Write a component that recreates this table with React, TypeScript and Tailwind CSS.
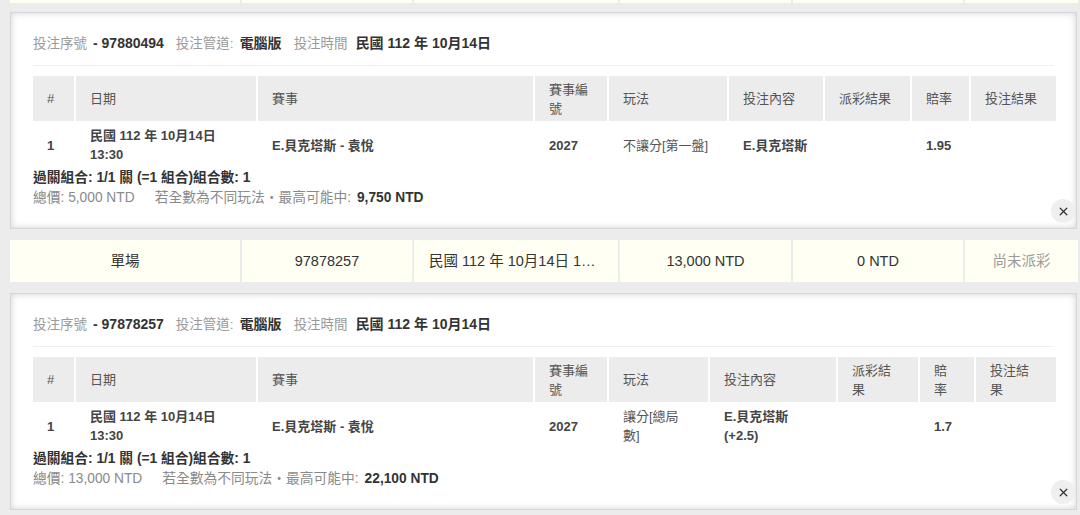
import { X } from "lucide-react";

interface BetRow {
  date: string;
  match: string;
  code: string;
  play: string;
  pick: string;
  payout: string;
  odds: string;
  result: string;
}

interface BetPanelProps {
  serial: string;
  cols: string;
  row: BetRow;
  total: string;
  maxWin: string;
}

const headers = ["#", "日期", "賽事", "賽事編號", "玩法", "投注內容", "派彩結果", "賠率", "投注結果"];

function SummaryRow({ cells, thin }: { cells: string[]; thin?: boolean }) {
  return (
    <div className="ml-[10px] w-[1068px] grid grid-cols-[230px_170px_204px_171px_170px_1fr] gap-x-[2px]">
      {cells.map((c, i) => (
        <div
          key={i}
          className={
            thin
              ? "h-[3px] bg-[#fffff4]"
              : `bg-[#fffff4] py-[11px] px-[15px] text-center text-[14.5px] leading-[20px] truncate ${
                  i === 5 ? "text-[#9a9a9a]" : "text-[#333]"
                }`
          }
        >
          {c}
        </div>
      ))}
    </div>
  );
}

function BetPanel({ serial, cols, row, total, maxWin }: BetPanelProps) {
  const body = [
    { v: "1", bold: true },
    { v: row.date, bold: true },
    { v: row.match, bold: true },
    { v: row.code, bold: true },
    { v: row.play, bold: false },
    { v: row.pick, bold: true, keep: true },
    { v: row.payout, bold: true },
    { v: row.odds, bold: true },
    { v: row.result, bold: true },
  ];

  return (
    <div className="relative ml-[10px] w-[1067px] bg-white border border-[#d6d6d6] shadow-[inset_0_0_7px_rgba(0,0,0,0.18)] px-[22px] pt-5 pb-5 text-[13px]">
      {/* 投注資訊 */}
      <div className="flex items-baseline h-[20px] pb-3 border-b border-[#efefef] text-[13.5px] leading-[20px] box-content">
        <span className="text-[#9a9a9a]">投注序號</span>
        <span className="font-bold text-[#333] text-[14px] ml-[6px] whitespace-pre">- {serial}</span>
        <span className="text-[#9a9a9a] ml-3">投注管道:</span>
        <span className="font-bold text-[#333] text-[14px] ml-[6px]">電腦版</span>
        <span className="text-[#9a9a9a] ml-3">投注時間</span>
        <span className="font-bold text-[#333] text-[14px] ml-[8px] whitespace-pre">民國 112 年 10月14日</span>
      </div>

      <div className={`mt-[10px] grid ${cols} gap-x-[2px] gap-y-[2px]`}>
        {headers.map((h) => (
          <div
            key={h}
            className="bg-[#ececec] h-[45px] flex items-center pl-[14px] pr-[15px] text-[#555] leading-[19px]"
          >
            {h}
          </div>
        ))}
        {body.map((c, i) => (
          <div
            key={i}
            className={`flex items-center pl-[14px] pr-[15px] py-[3px] min-h-[44px] leading-[19px] ${
              c.bold ? "font-bold text-[#444]" : "text-[#555]"
            } ${c.keep ? "break-keep" : ""}`}
          >
            {c.v}
          </div>
        ))}
      </div>

      <div className="text-[13.75px] mt-[1px]">
        <div className="leading-[20px] font-bold text-[#333]">過關組合: 1/1 關 (=1 組合)組合數: 1</div>
        <div className="leading-[20px] text-[#8a8a8a]">
          總價: {total}
          <span className="ml-5">若全數為不同玩法・最高可能中:</span>
          <span className="font-bold text-[#333] ml-[6px]">{maxWin}</span>
        </div>
      </div>

      <button className="absolute right-[1px] bottom-[5px] w-6 h-6 rounded-full bg-[#efefef] flex items-center justify-center text-[#333]">
        <X size={13} strokeWidth={2.3} />
      </button>
    </div>
  );
}

export default function App() {
  return (
    <div className="min-h-screen bg-[#ececec] font-['Liberation_Sans','Noto_Sans_CJK_TC',sans-serif] flex flex-col">
      <SummaryRow cells={["", "", "", "", "", ""]} thin />

      <div className="mt-[9px]">
        <BetPanel
          serial="97880494"
          cols="grid-cols-[41px_180px_275px_72px_118px_94px_85px_57px_85px]"
          row={{
            date: "民國 112 年 10月14日 13:30",
            match: "E.貝克塔斯 - 袁悅",
            code: "2027",
            play: "不讓分[第一盤]",
            pick: "E.貝克塔斯",
            payout: "",
            odds: "1.95",
            result: "",
          }}
          total="5,000 NTD"
          maxWin="9,750 NTD"
        />
      </div>

      <div className="mt-[11px]">
        <SummaryRow cells={["單場", "97878257", "民國 112 年 10月14日 13:30", "13,000 NTD", "0 NTD", "尚未派彩"]} />
      </div>

      <div className="mt-[11px]">
        <BetPanel
          serial="97878257"
          cols="grid-cols-[41px_180px_275px_72px_99px_126px_80px_54px_80px]"
          row={{
            date: "民國 112 年 10月14日 13:30",
            match: "E.貝克塔斯 - 袁悅",
            code: "2027",
            play: "讓分[總局數]",
            pick: "E.貝克塔斯 (+2.5)",
            payout: "",
            odds: "1.7",
            result: "",
          }}
          total="13,000 NTD"
          maxWin="22,100 NTD"
        />
      </div>
    </div>
  );
}
